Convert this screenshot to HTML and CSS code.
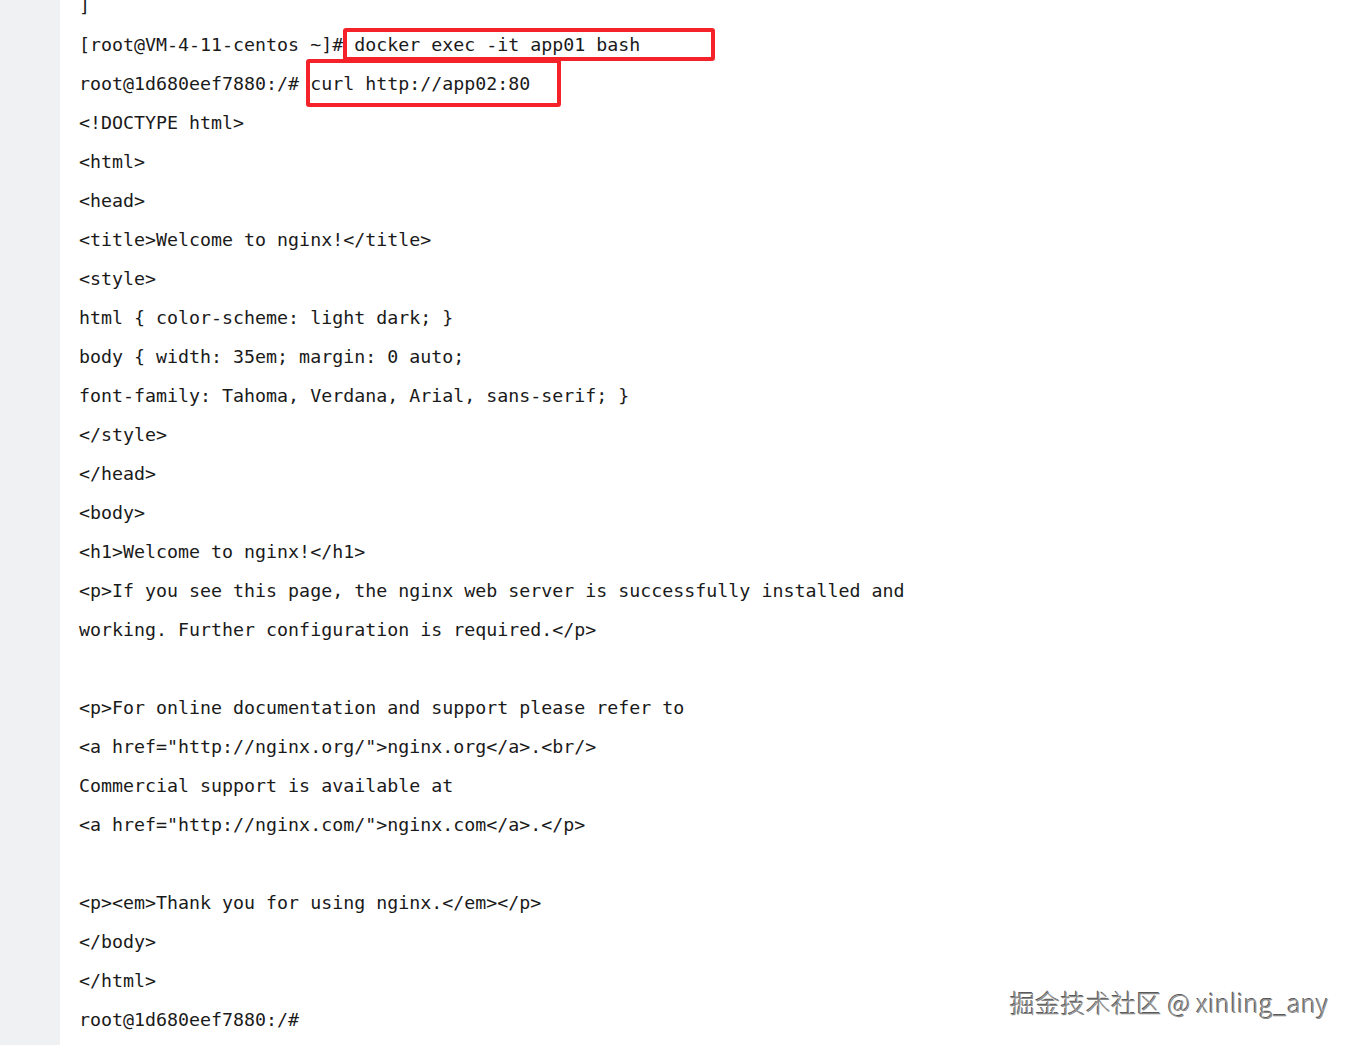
FILE: index.html
```html
<!DOCTYPE html>
<html lang="en">
<head>
<meta charset="utf-8">
<title>terminal</title>
<link rel="stylesheet" href="styles.css">
</head>
<body>
<div class="page">
  <aside class="gutter"></aside>
  <main class="main">
    <div class="code">
      <div class="line">]</div>
      <div class="line">[root@VM-4-11-centos ~]# docker exec -it app01 bash</div>
      <div class="line">root@1d680eef7880:/# curl http://app02:80</div>
      <div class="line">&lt;!DOCTYPE html&gt;</div>
      <div class="line">&lt;html&gt;</div>
      <div class="line">&lt;head&gt;</div>
      <div class="line">&lt;title&gt;Welcome to nginx!&lt;/title&gt;</div>
      <div class="line">&lt;style&gt;</div>
      <div class="line">html { color-scheme: light dark; }</div>
      <div class="line">body { width: 35em; margin: 0 auto;</div>
      <div class="line">font-family: Tahoma, Verdana, Arial, sans-serif; }</div>
      <div class="line">&lt;/style&gt;</div>
      <div class="line">&lt;/head&gt;</div>
      <div class="line">&lt;body&gt;</div>
      <div class="line">&lt;h1&gt;Welcome to nginx!&lt;/h1&gt;</div>
      <div class="line">&lt;p&gt;If you see this page, the nginx web server is successfully installed and</div>
      <div class="line">working. Further configuration is required.&lt;/p&gt;</div>
      <div class="line"></div>
      <div class="line">&lt;p&gt;For online documentation and support please refer to</div>
      <div class="line">&lt;a href="http://nginx.org/"&gt;nginx.org&lt;/a&gt;.&lt;br/&gt;</div>
      <div class="line">Commercial support is available at</div>
      <div class="line">&lt;a href="http://nginx.com/"&gt;nginx.com&lt;/a&gt;.&lt;/p&gt;</div>
      <div class="line"></div>
      <div class="line">&lt;p&gt;&lt;em&gt;Thank you for using nginx.&lt;/em&gt;&lt;/p&gt;</div>
      <div class="line">&lt;/body&gt;</div>
      <div class="line">&lt;/html&gt;</div>
      <div class="line">root@1d680eef7880:/#</div>
    </div>
    <div class="mark mark-exec"></div>
    <div class="mark mark-curl"></div>
    <div class="watermark">掘金技术社区 @ xinling_any</div>
  </main>
</div>
</body>
</html>
```
FILE: styles.css
```css
html, body {
  margin: 0;
  padding: 0;
  background: #ffffff;
}
.page {
  display: flex;
  height: 1045px;
  overflow: hidden;
}
.gutter {
  width: 60px;
  flex: none;
  background: #f0f1f3;
}
.main {
  position: relative;
  flex: 1;
  padding-left: 19px;
}
.code {
  margin-top: -14px;
  font-family: "DejaVu Sans Mono", "Liberation Mono", monospace;
  font-size: 18.3px;
  color: #1a1a1a;
}
.line {
  height: 39px;
  line-height: 39px;
  white-space: pre;
}
.mark {
  position: absolute;
  border: 4px solid #f5222a;
  border-radius: 3px;
  box-sizing: border-box;
}
.mark-exec {
  left: 283px;
  top: 28px;
  width: 372px;
  height: 33px;
}
.mark-curl {
  left: 246px;
  top: 59px;
  width: 255px;
  height: 48px;
}
.watermark {
  position: absolute;
  left: 950px;
  top: 984px;
  font-family: "Noto Sans CJK SC", "Noto Sans", sans-serif;
  font-size: 25px;
  font-weight: 300;
  letter-spacing: 0.3px;
  color: #8a8a8a;
  text-shadow: 1px 1px 0 #ffffff, -1px -1px 0 #5a5a5a;
  white-space: nowrap;
}
```
